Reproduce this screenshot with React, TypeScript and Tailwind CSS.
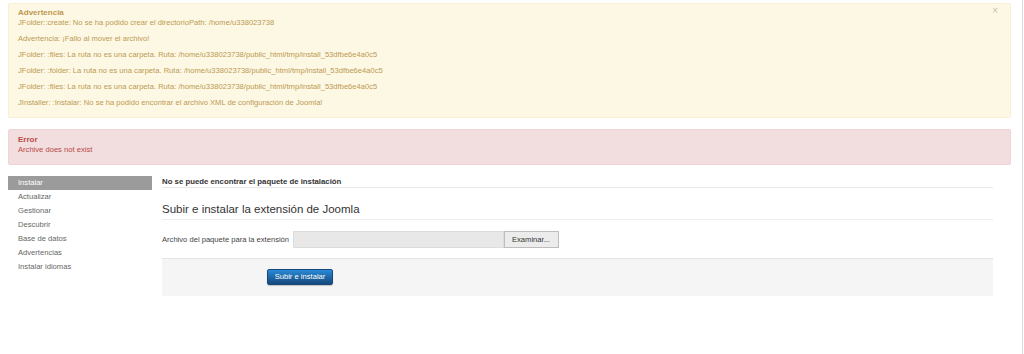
import React from "react";

const navItems = [
  "Actualizar",
  "Gestionar",
  "Descubrir",
  "Base de datos",
  "Advertencias",
  "Instalar idiomas",
];

const warnings = [
  "Advertencia: ¡Fallo al mover el archivo!",
  "JFolder: :files: La ruta no es una carpeta. Ruta: /home/u338023738/public_html/tmp/install_53dfbe6e4a0c5",
  "JFolder: :folder: La ruta no es una carpeta. Ruta: /home/u338023738/public_html/tmp/install_53dfbe6e4a0c5",
  "JFolder: :files: La ruta no es una carpeta. Ruta: /home/u338023738/public_html/tmp/install_53dfbe6e4a0c5",
  "JInstaller: :Instalar: No se ha podido encontrar el archivo XML de configuración de Joomla!",
];

export default function App() {
  return (
    <div
      className="flex w-[1024px] h-[354px] bg-white overflow-hidden text-[7.6px] text-[#333]"
      style={{ fontFamily: '"Liberation Sans", Arial, sans-serif' }}
    >
      <div className="w-[1022px] flex flex-col pl-[8px] pr-[11px] pt-[3px]">
        {/* Warning */}
        <div className="relative h-[115px] bg-[#fcf8e3] border border-[#fbeed5] rounded-[2px] pl-[9px] pt-[4px] text-[#c09853]">
          <span className="absolute right-[12px] top-[1px] text-[10px] leading-[12px] text-[#c8c0b0]">×</span>
          <div className="font-bold text-[8px] leading-[10px]">Advertencia</div>
          <p className="leading-[10px] mb-[6px]">
            JFolder::create: No se ha podido crear el directorioPath: /home/u338023738
          </p>
          {warnings.map((w, i) => (
            <p key={i} className="leading-[10px] mb-[6px]">
              {w}
            </p>
          ))}
        </div>

        {/* Error */}
        <div className="mt-[11px] h-[36px] bg-[#f2dede] border border-[#eed3d7] rounded-[2px] pl-[9px] pt-[5px] text-[#b94a48]">
          <div className="font-bold text-[8px] leading-[10px]">Error</div>
          <p className="leading-[9px]">Archive does not exist</p>
        </div>

        {/* Main row */}
        <div className="mt-[11px] flex">
          <div className="w-[144px] flex flex-col">
            <div className="h-[14px] leading-[14px] bg-[#9b9b9b] text-white pl-[10px]">Instalar</div>
            {navItems.map((n) => (
              <div key={n} className="h-[14px] leading-[14px] pl-[10px] text-[#666]">
                {n}
              </div>
            ))}
          </div>
          <div className="ml-[10px] w-[831px] flex flex-col">
            <div className="mt-[1px] h-[11px] leading-[10px] text-[7.8px] font-bold border-b border-[#e8e8e8] text-[#333]">
              No se puede encontrar el paquete de instalación
            </div>
            <div className="mt-[14px] text-[11.5px] leading-[14px] pb-[3px] border-b border-[#eee] text-[#333]">
              Subir e instalar la extensión de Joomla
            </div>
            <div className="mt-[11px] flex items-center h-[17px]">
              <span className="w-[131px] text-[#444]">Archivo del paquete para la extensión</span>
              <div className="w-[211px] h-[17px] bg-[#e8e8e8] border border-[#dcdcdc]" />
              <div className="w-[55px] h-[17px] bg-[#ececec] border border-[#bdbdbd] flex items-center pl-[7px] text-[#333]">
                Examinar...
              </div>
            </div>
            <div className="mt-[10px] h-[38px] bg-[#f5f5f5] border-t border-[#e5e5e5] pl-[105px] pt-[10px]">
              <div className="w-[66px] h-[16px] rounded-[2px] border border-[#15497c] bg-gradient-to-b from-[#2a8ad8] to-[#15497c] text-white flex items-center justify-center shadow-[0_1px_1px_rgba(0,0,0,0.2)]">
                Subir e instalar
              </div>
            </div>
          </div>
        </div>
      </div>
      <div className="w-[1px] h-full bg-[#dadada]" />
      <div className="w-[1px] h-full bg-white" />
    </div>
  );
}
